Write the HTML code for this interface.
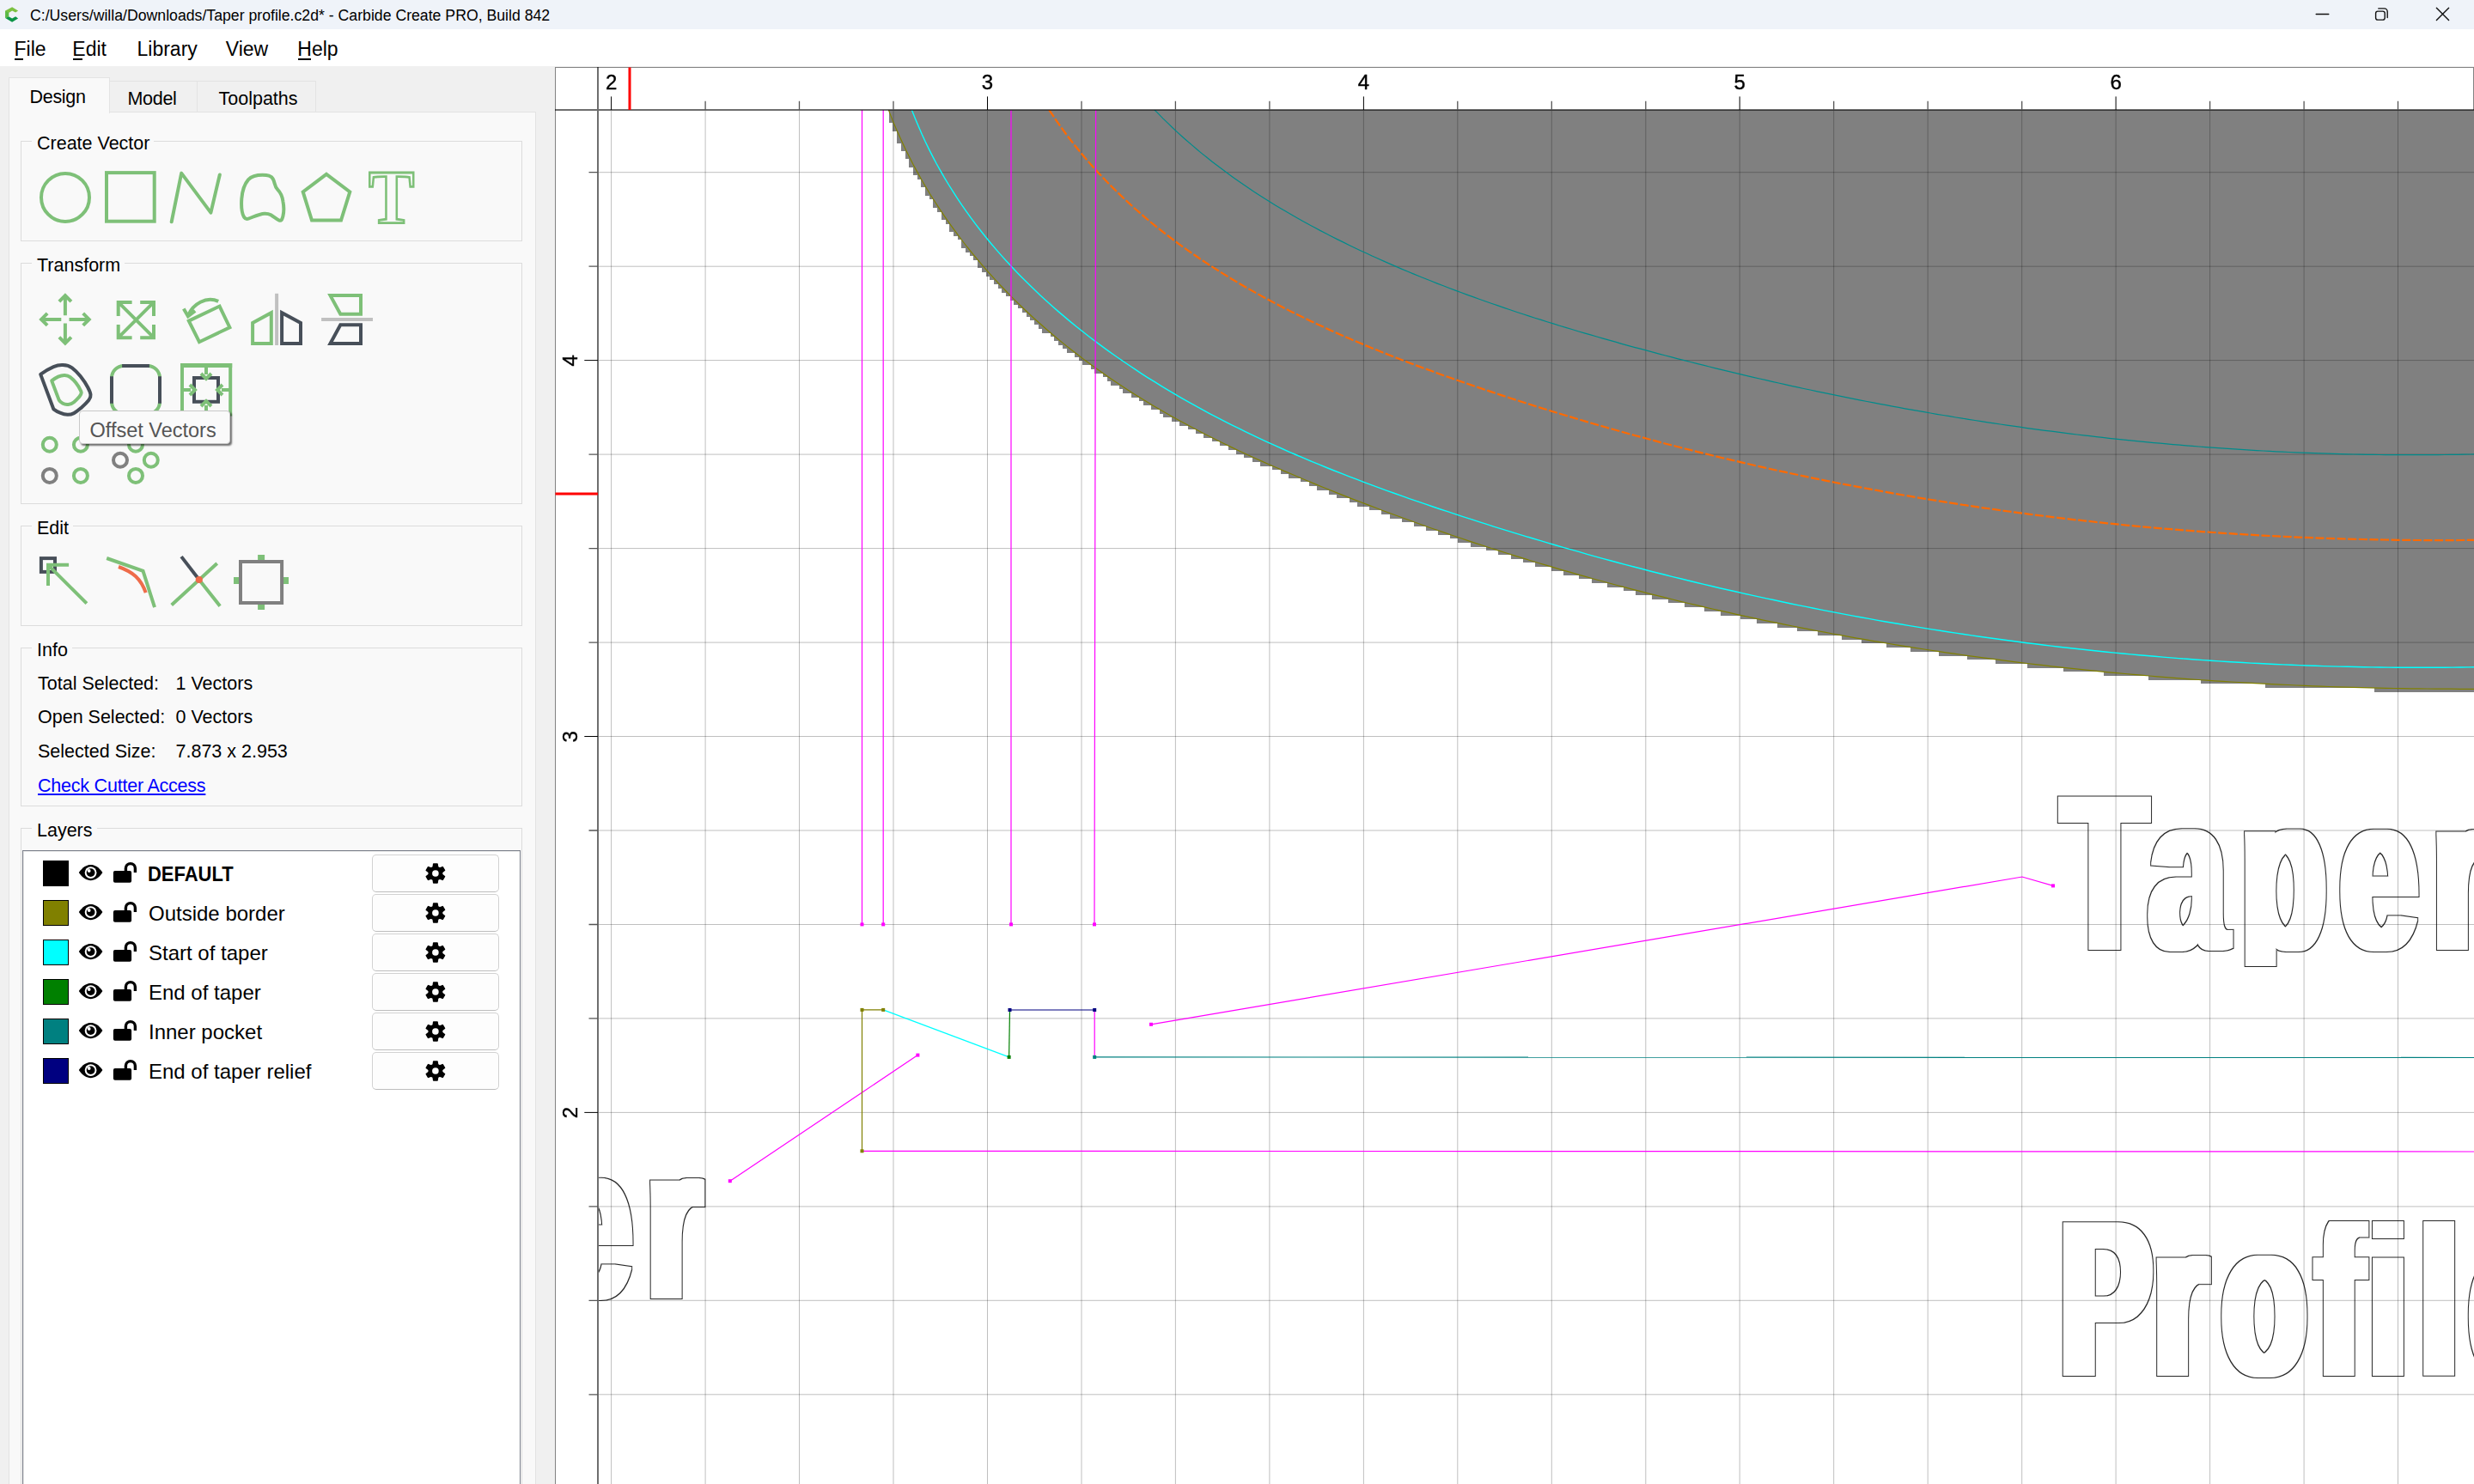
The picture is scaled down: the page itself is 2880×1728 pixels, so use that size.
<!DOCTYPE html>
<html lang="en"><head><meta charset="utf-8"><title>Carbide Create</title>
<style>
html,body{margin:0;padding:0}
body{width:2880px;height:1728px;overflow:hidden;background:#f0f0f0;font-family:"Liberation Sans",sans-serif;color:#000;position:relative}
.abs{position:absolute}
.t{position:absolute;white-space:pre;line-height:1;transform-origin:0 0;margin-top:2px}
#title{left:0;top:0;width:2880px;height:34px;background:#eff3f9}
#menu{left:0;top:34px;width:2880px;height:43px;background:#fff}
.gb{position:absolute;border:1px solid #dcdcdc;box-sizing:border-box}
  .gl{margin-top:2px;position:absolute;background:#f9f9f9;padding:0 5px 0 6px;font-size:21.5px;line-height:1;white-space:pre}
.btn{position:absolute;left:433px;width:148px;height:44px;box-sizing:border-box;border:1px solid #d2d2d2;border-bottom-color:#bdbdbd;border-radius:5px;background:#fdfdfd}
.sw{position:absolute;left:50px;width:30px;height:30px;box-sizing:border-box;border:1px solid #000}
.ln{margin-top:1.5px;transform-origin:0 0;position:absolute;left:173px;font-size:24px;line-height:1;white-space:pre}
svg{position:absolute;left:0;top:0}
</style></head><body>

<div id="title" class="abs"></div><div id="menu" class="abs"></div>
<div class="t" id="ttl" style="left:34.5px;top:6.7px;font-size:18px;transform:scaleX(0.982)">C:/Users/willa/Downloads/Taper profile.c2d* - Carbide Create PRO, Build 842</div>
<div class="t m" style="left:16.5px;top:44px;font-size:23px">File</div>
<div class="t m" style="left:84.3px;top:44px;font-size:23px">Edit</div>
<div class="t m" style="left:159.5px;top:44px;font-size:23px">Library</div>
<div class="t m" style="left:262.8px;top:44px;font-size:23px">View</div>
<div class="t m" style="left:346.3px;top:44px;font-size:23px">Help</div>
<div class="abs" style="left:16.8px;top:68px;width:10.2px;height:1.6px;background:#000"></div>
<div class="abs" style="left:84.6px;top:68px;width:11.6px;height:1.6px;background:#000"></div>
<div class="abs" style="left:346.6px;top:68px;width:15.4px;height:1.6px;background:#000"></div>
<div class="abs" style="left:10px;top:130px;width:614px;height:1610px;box-sizing:border-box;border:1px solid #e3e3e3;background:#f9f9f9"></div>
<div class="abs" style="left:127px;top:94px;width:103px;height:37px;box-sizing:border-box;border:1px solid #e3e3e3;border-left:none;background:#f0f0f0"></div>
<div class="abs" style="left:229px;top:94px;width:139px;height:37px;box-sizing:border-box;border:1px solid #e3e3e3;background:#f0f0f0"></div>
<div class="abs" style="left:10px;top:90px;width:118px;height:42px;box-sizing:border-box;border:1px solid #e3e3e3;border-bottom:none;background:#f9f9f9"></div>
<div class="t" style="left:34.5px;top:101px;font-size:21.5px;letter-spacing:-0.3px">Design</div>
<div class="t" style="left:148.5px;top:103px;font-size:21.5px;letter-spacing:-0.3px">Model</div>
<div class="t" style="left:254.5px;top:103px;font-size:21.5px">Toolpaths</div>
<div class="gb" style="left:24px;top:164px;width:584px;height:117px"></div>
<div class="gl" style="left:37px;top:155px">Create Vector</div>
<div class="gb" style="left:24px;top:306px;width:584px;height:281px"></div>
<div class="gl" style="left:37px;top:297px">Transform</div>
<div class="gb" style="left:24px;top:612px;width:584px;height:117px"></div>
<div class="gl" style="left:37px;top:603px">Edit</div>
<div class="gb" style="left:24px;top:754px;width:584px;height:185px"></div>
<div class="gl" style="left:37px;top:745px">Info</div>
<div class="gb" style="left:24px;top:964px;width:584px;height:800px"></div>
<div class="gl" style="left:37px;top:955px">Layers</div>
<div class="t" style="left:44px;top:783.5px;font-size:21.5px">Total Selected:</div>
<div class="t" style="left:204.5px;top:783.5px;font-size:21.5px">1 Vectors</div>
<div class="t" style="left:44px;top:823px;font-size:21.5px">Open Selected:</div>
<div class="t" style="left:204.5px;top:823px;font-size:21.5px">0 Vectors</div>
<div class="t" style="left:44px;top:863px;font-size:21.5px">Selected Size:</div>
<div class="t" style="left:204.5px;top:863px;font-size:21.5px">7.873 x 2.953</div>
<div class="t" style="left:44px;top:902.7px;font-size:21.5px;letter-spacing:-0.22px;color:#0000ff;text-decoration:underline">Check Cutter Access</div>
<div class="abs" style="left:26px;top:990px;width:580px;height:760px;box-sizing:border-box;border:1px solid #7a7f8a;background:#fff;box-shadow:inset 1px 1px 0 #e9e9e9"></div>
<div class="sw" style="top:1002px;background:#000000"></div>
<div class="ln" style="top:1004.4px;font-weight:bold;transform:scaleX(0.915);margin-left:-1.5px;">DEFAULT</div>
<div class="btn" style="top:995px"></div>
<div class="sw" style="top:1048px;background:#808000"></div>
<div class="ln" style="top:1050.4px;">Outside border</div>
<div class="btn" style="top:1041px"></div>
<div class="sw" style="top:1094px;background:#00ffff"></div>
<div class="ln" style="top:1096.4px;">Start of taper</div>
<div class="btn" style="top:1087px"></div>
<div class="sw" style="top:1140px;background:#008000"></div>
<div class="ln" style="top:1142.4px;">End of taper</div>
<div class="btn" style="top:1133px"></div>
<div class="sw" style="top:1186px;background:#008080"></div>
<div class="ln" style="top:1188.4px;">Inner pocket</div>
<div class="btn" style="top:1179px"></div>
<div class="sw" style="top:1232px;background:#000080"></div>
<div class="ln" style="top:1234.4px;">End of taper relief</div>
<div class="btn" style="top:1225px"></div><svg width="646" height="1728" viewBox="0 0 646 1728" fill="none" stroke-width="4">
<path d="M14.1,8.2L21.1,12.5L18.1,14.6L14.1,12.4L10.2,15V19.2L6.2,21.1V12.6Z" fill="#7cc142" stroke="none"/>
<path d="M10.2,19.2L14.1,21.6L18.1,19.2L21.1,21.4L14.1,25.7L6.2,21.1Z" fill="#0b9446" stroke="none"/>
<path d="M6.2,21.1L10.2,19.2V15L6.2,12.6Z" fill="#5ab947" stroke="none"/>
<circle cx="76" cy="229.9" r="28" stroke="#7EC078"/>
<rect x="124" y="201.1" width="55.7" height="56.6" stroke="#7EC078"/>
<path d="M199.7,258.3L211.2,201.6L245.4,247.6L255.8,203.5" stroke="#7EC078" stroke-linecap="round" stroke-linejoin="round"/>
<path d="M305.6,203.8C311,203.8 316,204 318.2,209.1C320,213 319.5,217 323.1,220.7C326,223.700 328.500,228 329.4,234.3C330.500,240 330.600,247 329.4,251.8C328.500,255.500 327.500,257.500 325,256.600C322,255.500 319,252.500 315.3,250.3C313,249 310.500,248.600 308,248.7C302,249 295,252.500 289.100,254.700C286.500,255.600 285,254.500 283.800,252.300C281.500,248 280.700,240 281.300,231.400C282,222 284.500,214.500 289.100,209.100C293,205 299,203.800 305.600,203.800Z" stroke="#7EC078"/>
<path d="M380,202.8L407.3,223.4L397,256.5H363L352.700,223.400Z" stroke="#7EC078" stroke-linejoin="miter"/>
<text transform="translate(429,259) scale(0.9,1)" x="0" y="0" font-family="Liberation Serif,serif" font-weight="bold" font-size="89" stroke="#7EC078" stroke-width="2.8">T</text>
<path d="M75.9,367.3L75.9,344.1M82.9,351.1L75.9,344.1L68.9,351.1M75.9,376.5L75.9,399.7M68.9,392.7L75.9,399.7L82.9,392.7M71.3,371.9L48.1,371.9M55.1,364.9L48.1,371.9L55.1,378.9M80.5,371.9L103.7,371.9M96.7,378.9L103.7,371.9L96.7,364.9" stroke="#7EC078" stroke-linejoin="miter"/>
<path d="M137.700,368V351.900H153.600M163.200,351.900H179V368M179,378V393.200H163.200M153.600,393.200H137.700V378M137.700,351.900L179,393.200M179,351.900L137.700,393.200" stroke="#7EC078"/>
<path d="M219.800,373.600L255.600,356.600L267.400,381.200L232,398.200Z" stroke="#7EC078"/>
<path d="M254.200,350.800C240,344.500 224.500,354 219.200,367M213.800,359.600L218.900,368.300L227.200,362" stroke="#7EC078"/>
<path d="M322.100,341.800V402" stroke="#c0c0c0"/>
<path d="M294.100,400V376L315.800,364.200V400Z" stroke="#7EC078"/>
<path d="M328.100,400V364.200L350,376V400Z" stroke="#474F59"/>
<path d="M374.100,371.900H434" stroke="#c0c0c0"/>
<path d="M384.500,344.100H420V365.800H396.300Z" stroke="#7EC078"/>
<path d="M396.300,378.300H420V400H384.500Z" stroke="#474F59"/>
<path d="M47.200,435.900C52,432.500 57,429.500 62.300,427.200C66,425.600 69.500,424.900 73.100,425.100C77,425.300 80.600,426 83.900,428.300C87.500,431 90.700,434.300 93.600,438C97,442.300 100,446.700 102.200,451C103.800,454 105.200,457 105.500,459.600C105.800,462 104.800,464.200 103.300,466.100C100.800,469.200 97.800,472 94.700,474.700C92,477 89.300,479.500 86.100,481.100C83.700,482.300 81.100,482.900 78.500,482.800C75.500,482.700 72.700,481.800 69.900,480.600C67,479.500 64.500,478 62.300,476.300Z" stroke="#474F59" stroke-linejoin="round"/>
<path d="M60.200,443.400C62.500,441.500 65,439.800 67.700,438.600C70.100,437.500 72.700,436.800 75.300,436.900C77.600,437 79.900,437.700 81.700,439.100C84.200,441 86.300,443.200 88.200,445.600C90.300,448.300 92.200,451.100 93.600,454.200C94.200,455.500 94.800,456.400 94.700,457.400C94.600,459 93.500,460.500 92.500,461.700C90.600,464 88.400,466.200 86.100,468.200C84.200,469.800 82,470.600 79.600,470.900C77.400,471.200 75,470.800 73.100,469.800C71.400,468.900 69.700,467.700 68.800,466.100Z" stroke="#7EC078" stroke-linejoin="round"/>
<rect x="130" y="426" width="56" height="56" rx="14" stroke="#7EC078"/>
<path d="M142.100,426H173.900M130,438.200V469.800M186,438.200V469.800M142.100,482H173.900" stroke="#474F59"/>
<path d="M210,425.400H270.200" stroke="#7EC078" stroke-width="5"/>
<path d="M212,423V484.400M268.200,423V484.400M210,482.400H270.200" stroke="#7EC078"/>
<path d="M240,427V436M240,472V482M213,454H222M258,454H268" stroke="#7EC078"/>
<rect x="226" y="440" width="28" height="27.800" stroke="#474F59"/>
<path d="M234,435L240,441L246,435M246,473L240,467L234,473M221,460L227,454L221,448M259,448L253,454L259,460" stroke="#7EC078"/>
<circle cx="57.8" cy="517.8" r="8" stroke="#7EC078"/>
<circle cx="93.9" cy="517.8" r="8" stroke="#7EC078"/>
<circle cx="57.8" cy="553.9" r="8" stroke="#808080"/>
<circle cx="93.9" cy="553.9" r="8" stroke="#7EC078"/>
<circle cx="158" cy="517.8" r="8" stroke="#7EC078"/>
<circle cx="140" cy="535.8" r="8" stroke="#808080"/>
<circle cx="175.8" cy="535.8" r="8" stroke="#7EC078"/>
<circle cx="158" cy="553.9" r="8" stroke="#7EC078"/>
<rect x="47.900" y="650.100" width="16.100" height="15.800" stroke="#474F59"/>
<path d="M80.100,657.800H56V682.100M56,657.800L100.900,702.700" stroke="#7EC078"/>
<path d="M124.200,650L166.500,664.900L180,707.200" stroke="#7EC078"/>
<path d="M138,660C155,666 164,674 169.700,690.100" stroke="#EE6C4A"/>
<path d="M211.100,648.100L231.800,675" stroke="#474F59"/>
<path d="M231.800,675L256.100,705.700M252.700,655.900L199.700,704.400" stroke="#7EC078"/>
<circle cx="231.800" cy="675" r="4.100" fill="#EE6C4A" stroke="none"/>
<path d="M300.100,649H308.100M300.100,707H308.100M275,672V680M333,672V680" stroke="#7EC078" stroke-width="6"/>
<rect x="280" y="654" width="48.100" height="48" stroke="#808080" fill="#f9f9f9"/>
<g transform="translate(105.600,1016.1)" stroke="none"><path d="M-13.800,0C-9.500,-6.600 -4.500,-9.100 0,-9.100C4.500,-9.100 9.500,-6.600 13.800,0C9.500,6.600 4.500,9.100 0,9.100C-4.500,9.100 -9.500,6.600 -13.800,0Z" fill="#000"/><circle r="6.900" fill="#fff"/><circle r="4.900" fill="#000"/><circle cx="-1.900" cy="-2.100" r="1.900" fill="#fff"/></g>
<g transform="translate(0,1016.1)"><rect x="131.900" y="-2.100" width="21.200" height="13.800" rx="2" fill="#000" stroke="none"/><path d="M146.400,-1V-5A5.500,5.500 0 0 1 157.400,-5V-0.100" stroke="#000" stroke-width="3.400"/></g>
<path d="M504.2,1009.7L504.7,1006L509.1,1006L509.6,1009.7L511.8,1011L515.3,1009.6L517.5,1013.4L514.6,1015.7L514.6,1018.3L517.5,1020.6L515.3,1024.4L511.8,1023L509.6,1024.3L509.1,1028L504.7,1028L504.2,1024.3L502,1023L498.5,1024.4L496.3,1020.6L499.2,1018.3L499.2,1015.7L496.3,1013.4L498.5,1009.6L502,1011Z" fill="#000" stroke="#000" stroke-width="1.500" stroke-linejoin="round"/><circle cx="506.9" cy="1017" r="3.8" fill="#fdfdfd" stroke="none"/>
<g transform="translate(105.600,1062.1)" stroke="none"><path d="M-13.800,0C-9.500,-6.600 -4.500,-9.100 0,-9.100C4.500,-9.100 9.500,-6.600 13.800,0C9.500,6.600 4.500,9.100 0,9.100C-4.500,9.100 -9.500,6.600 -13.800,0Z" fill="#000"/><circle r="6.900" fill="#fff"/><circle r="4.900" fill="#000"/><circle cx="-1.900" cy="-2.100" r="1.900" fill="#fff"/></g>
<g transform="translate(0,1062.1)"><rect x="131.900" y="-2.100" width="21.200" height="13.800" rx="2" fill="#000" stroke="none"/><path d="M146.400,-1V-5A5.500,5.500 0 0 1 157.400,-5V-0.100" stroke="#000" stroke-width="3.400"/></g>
<path d="M504.2,1055.7L504.7,1052L509.1,1052L509.6,1055.7L511.8,1057L515.3,1055.6L517.5,1059.4L514.6,1061.7L514.6,1064.3L517.5,1066.6L515.3,1070.4L511.8,1069L509.6,1070.3L509.1,1074L504.7,1074L504.2,1070.3L502,1069L498.5,1070.4L496.3,1066.6L499.2,1064.3L499.2,1061.7L496.3,1059.4L498.5,1055.6L502,1057Z" fill="#000" stroke="#000" stroke-width="1.500" stroke-linejoin="round"/><circle cx="506.9" cy="1063" r="3.8" fill="#fdfdfd" stroke="none"/>
<g transform="translate(105.600,1108.1)" stroke="none"><path d="M-13.800,0C-9.500,-6.600 -4.500,-9.100 0,-9.100C4.500,-9.100 9.500,-6.600 13.800,0C9.500,6.600 4.500,9.100 0,9.100C-4.500,9.100 -9.500,6.600 -13.800,0Z" fill="#000"/><circle r="6.900" fill="#fff"/><circle r="4.900" fill="#000"/><circle cx="-1.900" cy="-2.100" r="1.900" fill="#fff"/></g>
<g transform="translate(0,1108.1)"><rect x="131.900" y="-2.100" width="21.200" height="13.800" rx="2" fill="#000" stroke="none"/><path d="M146.400,-1V-5A5.500,5.500 0 0 1 157.400,-5V-0.100" stroke="#000" stroke-width="3.400"/></g>
<path d="M504.2,1101.7L504.7,1098L509.1,1098L509.6,1101.7L511.8,1103L515.3,1101.6L517.5,1105.4L514.6,1107.7L514.6,1110.3L517.5,1112.6L515.3,1116.4L511.8,1115L509.6,1116.3L509.1,1120L504.7,1120L504.2,1116.3L502,1115L498.5,1116.4L496.3,1112.6L499.2,1110.3L499.2,1107.7L496.3,1105.4L498.5,1101.6L502,1103Z" fill="#000" stroke="#000" stroke-width="1.500" stroke-linejoin="round"/><circle cx="506.9" cy="1109" r="3.8" fill="#fdfdfd" stroke="none"/>
<g transform="translate(105.600,1154.1)" stroke="none"><path d="M-13.800,0C-9.500,-6.600 -4.500,-9.100 0,-9.100C4.500,-9.100 9.500,-6.600 13.800,0C9.500,6.600 4.500,9.100 0,9.100C-4.500,9.100 -9.500,6.600 -13.800,0Z" fill="#000"/><circle r="6.900" fill="#fff"/><circle r="4.900" fill="#000"/><circle cx="-1.900" cy="-2.100" r="1.900" fill="#fff"/></g>
<g transform="translate(0,1154.1)"><rect x="131.900" y="-2.100" width="21.200" height="13.800" rx="2" fill="#000" stroke="none"/><path d="M146.400,-1V-5A5.500,5.500 0 0 1 157.400,-5V-0.100" stroke="#000" stroke-width="3.400"/></g>
<path d="M504.2,1147.7L504.7,1144L509.1,1144L509.6,1147.7L511.8,1149L515.3,1147.6L517.5,1151.4L514.6,1153.7L514.6,1156.3L517.5,1158.6L515.3,1162.4L511.8,1161L509.6,1162.3L509.1,1166L504.7,1166L504.2,1162.3L502,1161L498.5,1162.4L496.3,1158.6L499.2,1156.3L499.2,1153.7L496.3,1151.4L498.5,1147.6L502,1149Z" fill="#000" stroke="#000" stroke-width="1.500" stroke-linejoin="round"/><circle cx="506.9" cy="1155" r="3.8" fill="#fdfdfd" stroke="none"/>
<g transform="translate(105.600,1200.1)" stroke="none"><path d="M-13.800,0C-9.500,-6.600 -4.500,-9.100 0,-9.100C4.500,-9.100 9.500,-6.600 13.800,0C9.500,6.600 4.500,9.100 0,9.100C-4.500,9.100 -9.500,6.600 -13.800,0Z" fill="#000"/><circle r="6.900" fill="#fff"/><circle r="4.900" fill="#000"/><circle cx="-1.900" cy="-2.100" r="1.900" fill="#fff"/></g>
<g transform="translate(0,1200.1)"><rect x="131.900" y="-2.100" width="21.200" height="13.800" rx="2" fill="#000" stroke="none"/><path d="M146.400,-1V-5A5.500,5.500 0 0 1 157.400,-5V-0.100" stroke="#000" stroke-width="3.400"/></g>
<path d="M504.2,1193.7L504.7,1190L509.1,1190L509.6,1193.7L511.8,1195L515.3,1193.6L517.5,1197.4L514.6,1199.7L514.6,1202.3L517.5,1204.6L515.3,1208.4L511.8,1207L509.6,1208.3L509.1,1212L504.7,1212L504.2,1208.3L502,1207L498.5,1208.4L496.3,1204.6L499.2,1202.3L499.2,1199.7L496.3,1197.4L498.5,1193.6L502,1195Z" fill="#000" stroke="#000" stroke-width="1.500" stroke-linejoin="round"/><circle cx="506.9" cy="1201" r="3.8" fill="#fdfdfd" stroke="none"/>
<g transform="translate(105.600,1246.1)" stroke="none"><path d="M-13.800,0C-9.500,-6.600 -4.500,-9.100 0,-9.100C4.500,-9.100 9.500,-6.600 13.800,0C9.500,6.600 4.500,9.100 0,9.100C-4.500,9.100 -9.500,6.600 -13.800,0Z" fill="#000"/><circle r="6.900" fill="#fff"/><circle r="4.900" fill="#000"/><circle cx="-1.900" cy="-2.100" r="1.900" fill="#fff"/></g>
<g transform="translate(0,1246.1)"><rect x="131.900" y="-2.100" width="21.200" height="13.800" rx="2" fill="#000" stroke="none"/><path d="M146.400,-1V-5A5.500,5.500 0 0 1 157.400,-5V-0.100" stroke="#000" stroke-width="3.400"/></g>
<path d="M504.2,1239.7L504.7,1236L509.1,1236L509.6,1239.7L511.8,1241L515.3,1239.6L517.5,1243.4L514.6,1245.7L514.6,1248.3L517.5,1250.6L515.3,1254.4L511.8,1253L509.6,1254.3L509.1,1258L504.7,1258L504.2,1254.3L502,1253L498.5,1254.4L496.3,1250.6L499.2,1248.3L499.2,1245.7L496.3,1243.4L498.5,1239.6L502,1241Z" fill="#000" stroke="#000" stroke-width="1.500" stroke-linejoin="round"/><circle cx="506.9" cy="1247" r="3.8" fill="#fdfdfd" stroke="none"/>
</svg>
<div class="abs" style="left:92px;top:478px;width:176px;height:39px;box-sizing:border-box;border:1px solid #c9c9c9;border-radius:4px;background:#fafafa;box-shadow:2px 2px 2px rgba(0,0,0,0.55)"></div>
<div class="t" style="left:104.500px;top:487.500px;font-size:23.500px;color:#555">Offset Vectors</div><svg width="2880" height="1728" viewBox="0 0 2880 1728">
<defs><clipPath id="cv"><rect x="697" y="128" width="2183" height="1600"/></clipPath><filter id="ol" filterUnits="userSpaceOnUse" x="640" y="860" width="2300" height="868" color-interpolation-filters="sRGB"><feMorphology in="SourceAlpha" operator="dilate" radius="8 2" result="a"/><feMorphology in="SourceAlpha" operator="dilate" radius="7 1" result="b"/><feComposite in="a" in2="b" operator="out"/></filter></defs>
<rect x="646" y="78" width="2234" height="1650" fill="#fff"/>
<g clip-path="url(#cv)">
<path d="M1034.7,128V143.1H1039.4V152.5H1044.1V166.6H1048.8V176H1053.5V185.4H1058.2V194.8H1062.9V204.2H1067.6V208.9H1072.3V218.3H1077V227.7H1081.7V232.4H1086.4V241.8H1091.1V246.5H1095.8V255.9H1100.5V260.6H1105.2V270H1109.9V274.7H1114.6V279.4H1119.3V288.8H1124V293.5H1128.7V298.2H1133.4V302.9H1138.1V312.3H1142.8V317H1147.5V321.7H1152.2V326.4H1156.9V331.1H1161.6V335.8H1166.3V340.5H1171V345.2H1175.7V349.9H1180.4V354.6H1185.1V359.3H1189.8V364H1194.5V368.7H1199.2V373.4H1203.9V378.1H1208.6V382.8H1213.3V387.5H1222.7V392.2H1227.4V396.9H1232.1V401.6H1236.8V406.3H1241.5V411H1250.9V415.7H1255.6V420.4H1260.3V425.1H1269.7V429.8H1274.4V434.5H1283.8V439.2H1288.5V443.9H1293.2V448.6H1302.6V453.3H1307.3V458H1316.7V462.7H1326.1V467.4H1330.8V472.1H1340.2V476.8H1349.6V481.5H1354.3V486.2H1363.7V490.9H1373.1V495.6H1382.5V500.3H1391.9V505H1401.3V509.7H1410.7V514.4H1420.1V519.1H1429.5V523.8H1438.9V528.5H1448.3V533.2H1457.7V537.9H1467.1V542.6H1481.2V547.3H1490.6V552H1500V556.7H1514.1V561.4H1523.5V566.1H1532.9V570.8H1547V575.5H1556.4V580.2H1570.5V584.9H1579.9V589.6H1594V594.3H1608.1V599H1617.5V603.7H1631.6V608.4H1645.7V613.1H1659.8V617.8H1673.9V622.5H1688V627.2H1697.4V631.9H1711.5V636.6H1730.3V641.3H1744.4V646H1758.5V650.7H1772.6V655.4H1786.7V660.1H1805.5V664.8H1819.6V669.5H1838.4V674.2H1852.5V678.9H1871.3V683.6H1890.1V688.3H1904.2V693H1923V697.7H1941.8V702.4H1960.6V707.1H1984.1V711.8H2002.9V716.5H2026.4V721.2H2045.2V725.9H2068.7V730.6H2092.2V735.3H2115.7V740H2143.9V744.7H2167.4V749.4H2195.6V754.1H2223.8V758.8H2256.7V763.5H2289.6V768.2H2322.5V772.9H2360.1V777.6H2402.4V782.3H2449.4V787H2501.1V791.7H2562.2V796.4H2637.4V801.1H2764.3V805.8H2880V128Z" fill="#808080" shape-rendering="crispEdges"/>
<g opacity="0.25"><path d="M711.6,129V1728M821.1,129V1728M930.5,129V1728M1040,129V1728M1149.5,129V1728M1259,129V1728M1368.4,129V1728M1477.9,129V1728M1587.4,129V1728M1696.8,129V1728M1806.3,129V1728M1915.8,129V1728M2025.2,129V1728M2134.7,129V1728M2244.2,129V1728M2353.7,129V1728M2463.1,129V1728M2572.6,129V1728M2682.1,129V1728M2791.5,129V1728M697,200.7H2880M697,310.2H2880M697,419.6H2880M697,529.1H2880M697,638.6H2880M697,748.1H2880M697,857.5H2880M697,967H2880M697,1076.5H2880M697,1185.9H2880M697,1295.4H2880M697,1404.9H2880M697,1514.3H2880M697,1623.8H2880" stroke="#000" stroke-width="1" fill="none"/></g>
<path d="M1025.7,103.5L1028.8,112.7L1032.1,121.8L1035.5,130.9L1039,139.9L1042.7,148.8L1046.6,157.6L1050.6,166.3L1054.7,175L1059,183.5L1063.3,192L1067.9,200.4L1072.5,208.8L1077.3,217L1082.2,225.2L1087.3,233.3L1092.4,241.2L1097.7,249.2L1103.1,257L1108.6,264.7L1114.3,272.4L1120,280L1125.8,287.5L1131.8,294.9L1137.9,302.2L1144,309.4L1150.3,316.6L1156.7,323.7L1163.1,330.6L1169.7,337.5L1176.3,344.3L1183.1,351.1L1189.9,357.7L1196.8,364.2L1203.8,370.7L1210.9,377L1218,383.3L1225.3,389.5L1232.6,395.6L1240,401.6L1247.4,407.5L1255,413.3L1262.5,419.1L1270.2,424.7L1277.9,430.3L1285.7,435.8L1293.6,441.2L1301.5,446.5L1309.4,451.7L1317.5,456.9L1325.5,462L1333.7,467L1341.8,471.9L1350,476.7L1358.3,481.5L1366.6,486.2L1374.9,490.8L1383.3,495.3L1391.8,499.8L1400.2,504.2L1408.7,508.5L1417.2,512.8L1425.8,517L1434.4,521.1L1443,525.2L1451.6,529.2L1460.3,533.2L1469,537.1L1477.7,541L1486.5,544.8L1495.2,548.6L1504,552.3L1512.8,556L1521.6,559.7L1530.4,563.4L1539.2,567L1548.1,570.5L1556.9,574.1L1565.8,577.6L1574.7,581.1L1583.6,584.5L1592.5,587.9L1601.4,591.3L1610.3,594.7L1619.2,598L1628.2,601.3L1637.1,604.5L1646.1,607.8L1655,611L1664,614.2L1673,617.3L1682,620.4L1691,623.5L1700.1,626.5L1709.1,629.6L1718.1,632.6L1727.2,635.5L1736.3,638.5L1745.3,641.4L1754.4,644.2L1763.5,647.1L1772.6,649.9L1781.7,652.7L1790.8,655.5L1799.9,658.2L1809.1,660.9L1818.2,663.6L1827.4,666.2L1836.5,668.8L1845.7,671.4L1854.9,674L1864.1,676.5L1873.3,679L1882.5,681.5L1891.7,683.9L1900.9,686.3L1910.1,688.7L1919.3,691.1L1928.6,693.4L1937.8,695.7L1947.1,698L1956.3,700.3L1965.6,702.5L1974.9,704.7L1984.2,706.9L1993.4,709L2002.7,711.1L2012,713.2L2021.3,715.3L2030.7,717.3L2040,719.3L2049.3,721.3L2058.6,723.3L2068,725.2L2077.3,727.1L2086.7,729L2096,730.8L2105.4,732.7L2114.7,734.5L2124.1,736.2L2133.5,738L2142.9,739.7L2152.3,741.4L2161.6,743.1L2171,744.7L2180.4,746.3L2189.9,747.9L2199.3,749.5L2208.7,751.1L2218.1,752.6L2227.5,754.1L2236.9,755.5L2246.4,757L2255.8,758.4L2265.3,759.8L2274.7,761.2L2284.1,762.5L2293.6,763.9L2303,765.2L2312.5,766.4L2322,767.7L2331.4,768.9L2340.9,770.1L2350.4,771.3L2359.8,772.5L2369.3,773.6L2378.8,774.7L2388.3,775.8L2397.8,776.9L2407.2,777.9L2416.7,778.9L2426.2,779.9L2435.7,780.9L2445.2,781.8L2454.7,782.8L2464.2,783.7L2473.7,784.5L2483.2,785.4L2492.7,786.2L2502.2,787L2511.7,787.8L2521.2,788.6L2530.7,789.3L2540.2,790.1L2549.7,790.8L2559.2,791.5L2568.8,792.1L2578.3,792.8L2587.8,793.4L2597.3,794L2606.8,794.5L2616.3,795.1L2625.8,795.6L2635.3,796.1L2644.9,796.6L2654.4,797.1L2663.9,797.5L2673.4,798L2682.9,798.4L2692.4,798.8L2701.9,799.1L2711.4,799.5L2720.9,799.8L2730.5,800.1L2740,800.4L2749.5,800.6L2759,800.9L2768.5,801.1L2778,801.3L2787.5,801.5L2797,801.7L2806.5,801.8L2816,801.9L2825.5,802L2835,802.1L2844.4,802.2L2853.9,802.2L2863.4,802.3L2872.9,802.3L2882.4,802.3" fill="none" stroke="#808000" stroke-width="1.2"/>
<path d="M1052.4,102L1055.5,111.3L1058.7,120.6L1062.1,129.7L1065.7,138.7L1069.4,147.5L1073.2,156.3L1077.2,165L1081.4,173.6L1085.7,182.1L1090.1,190.5L1094.7,198.7L1099.4,206.9L1104.3,215L1109.3,222.9L1114.4,230.8L1119.6,238.6L1125,246.3L1130.4,253.9L1136,261.4L1141.7,268.7L1147.5,276L1153.4,283.2L1159.5,290.4L1165.6,297.4L1171.8,304.3L1178.1,311.1L1184.6,317.9L1191.1,324.5L1197.7,331.1L1204.4,337.6L1211.1,344L1218,350.3L1224.9,356.5L1231.9,362.6L1239,368.6L1246.1,374.6L1253.3,380.5L1260.6,386.3L1267.9,392L1275.3,397.6L1282.7,403.1L1290.2,408.6L1297.8,414L1305.4,419.3L1313.1,424.5L1320.8,429.7L1328.5,434.8L1336.3,439.8L1344.2,444.7L1352.1,449.6L1360,454.4L1368,459.1L1376.1,463.8L1384.1,468.4L1392.3,472.9L1400.4,477.4L1408.6,481.8L1416.9,486.1L1425.1,490.4L1433.4,494.6L1441.8,498.7L1450.2,502.8L1458.6,506.9L1467,510.9L1475.5,514.8L1484,518.7L1492.6,522.5L1501.1,526.3L1509.7,530L1518.3,533.7L1527,537.4L1535.7,540.9L1544.4,544.5L1553.1,548L1561.8,551.4L1570.6,554.9L1579.4,558.2L1588.2,561.6L1597,564.9L1605.8,568.1L1614.6,571.3L1623.5,574.5L1632.4,577.7L1641.3,580.8L1650.2,583.9L1659.1,586.9L1668,590L1676.9,593L1685.9,595.9L1694.8,598.9L1703.8,601.8L1712.7,604.7L1721.7,607.6L1730.6,610.4L1739.6,613.3L1748.6,616.1L1757.6,618.8L1766.5,621.6L1775.5,624.3L1784.5,627L1793.5,629.7L1802.5,632.4L1811.5,635L1820.5,637.6L1829.6,640.2L1838.6,642.7L1847.6,645.3L1856.6,647.8L1865.7,650.3L1874.7,652.7L1883.8,655.2L1892.8,657.6L1901.9,660L1910.9,662.3L1920,664.7L1929,667L1938.1,669.3L1947.2,671.6L1956.3,673.8L1965.4,676L1974.5,678.2L1983.5,680.4L1992.6,682.5L2001.8,684.7L2010.9,686.8L2020,688.8L2029.1,690.9L2038.2,692.9L2047.3,694.9L2056.5,696.9L2065.6,698.8L2074.7,700.8L2083.9,702.7L2093,704.6L2102.2,706.4L2111.3,708.3L2120.5,710.1L2129.6,711.9L2138.8,713.6L2148,715.4L2157.2,717.1L2166.3,718.8L2175.5,720.4L2184.7,722.1L2193.9,723.7L2203.1,725.3L2212.3,726.8L2221.5,728.4L2230.7,729.9L2239.9,731.4L2249.1,732.9L2258.3,734.3L2267.5,735.7L2276.8,737.1L2286,738.5L2295.2,739.9L2304.5,741.2L2313.7,742.5L2323,743.8L2332.2,745L2341.4,746.3L2350.7,747.5L2360,748.7L2369.2,749.8L2378.5,751L2387.8,752.1L2397,753.2L2406.3,754.2L2415.6,755.3L2424.9,756.3L2434.1,757.3L2443.4,758.2L2452.7,759.2L2462,760.1L2471.3,761L2480.6,761.9L2489.9,762.7L2499.2,763.5L2508.5,764.3L2517.9,765.1L2527.2,765.9L2536.5,766.6L2545.8,767.3L2555.1,768L2564.5,768.6L2573.8,769.3L2583.1,769.9L2592.5,770.5L2601.8,771L2611.2,771.5L2620.5,772.1L2629.9,772.5L2639.2,773L2648.6,773.5L2657.9,773.9L2667.3,774.3L2676.7,774.6L2686,775L2695.4,775.3L2704.8,775.6L2714.2,775.9L2723.5,776.1L2732.9,776.3L2742.3,776.5L2751.7,776.7L2761.1,776.9L2770.5,777L2779.9,777.1L2789.3,777.2L2798.7,777.2L2808.1,777.3L2817.5,777.3L2826.9,777.3L2836.3,777.2L2845.7,777.2L2855.1,777.1L2864.6,777L2874,776.9L2883.4,776.7" fill="none" stroke="#00ffff" stroke-width="1.4"/>
<path d="M1327.7,110.2L1332.8,116L1338.1,121.6L1343.3,127.2L1348.7,132.7L1354,138.1L1359.5,143.4L1365,148.7L1370.5,153.9L1376.1,159L1381.8,164L1387.5,168.9L1393.2,173.8L1399,178.6L1404.9,183.3L1410.7,188L1416.7,192.6L1422.7,197.1L1428.7,201.6L1434.7,206L1440.8,210.3L1447,214.6L1453.2,218.8L1459.4,222.9L1465.6,227L1471.9,231L1478.3,235L1484.6,238.9L1491,242.8L1497.5,246.6L1503.9,250.3L1510.4,254L1517,257.7L1523.5,261.3L1530.1,264.8L1536.7,268.4L1543.3,271.8L1550,275.2L1556.7,278.6L1563.4,281.9L1570.1,285.2L1576.8,288.5L1583.6,291.7L1590.4,294.8L1597.2,298L1604,301L1610.9,304.1L1617.7,307.1L1624.6,310.1L1631.5,313.1L1638.4,316L1645.3,318.9L1652.3,321.7L1659.2,324.5L1666.2,327.3L1673.2,330.1L1680.2,332.8L1687.2,335.5L1694.2,338.1L1701.3,340.8L1708.3,343.4L1715.4,345.9L1722.5,348.5L1729.6,351L1736.7,353.5L1743.8,355.9L1750.9,358.4L1758,360.8L1765.2,363.2L1772.3,365.5L1779.5,367.9L1786.7,370.2L1793.9,372.4L1801,374.7L1808.2,376.9L1815.5,379.2L1822.7,381.4L1829.9,383.5L1837.1,385.7L1844.4,387.8L1851.6,389.9L1858.8,392L1866.1,394.1L1873.3,396.2L1880.6,398.2L1887.9,400.3L1895.1,402.3L1902.4,404.3L1909.7,406.2L1917,408.2L1924.3,410.1L1931.5,412.1L1938.8,414L1946.1,415.9L1953.4,417.8L1960.7,419.7L1968,421.5L1975.3,423.4L1982.6,425.2L1989.9,427L1997.2,428.8L2004.6,430.6L2011.9,432.4L2019.2,434.1L2026.5,435.9L2033.8,437.6L2041.2,439.3L2048.5,441L2055.8,442.7L2063.1,444.4L2070.5,446L2077.8,447.6L2085.2,449.3L2092.5,450.9L2099.8,452.5L2107.2,454L2114.5,455.6L2121.9,457.1L2129.3,458.7L2136.6,460.2L2144,461.7L2151.3,463.2L2158.7,464.6L2166.1,466.1L2173.4,467.5L2180.8,468.9L2188.2,470.3L2195.6,471.7L2202.9,473.1L2210.3,474.4L2217.7,475.8L2225.1,477.1L2232.5,478.4L2239.9,479.7L2247.3,481L2254.7,482.3L2262.1,483.5L2269.5,484.7L2276.9,486L2284.3,487.2L2291.7,488.3L2299.1,489.5L2306.5,490.7L2313.9,491.8L2321.3,492.9L2328.7,494L2336.2,495.1L2343.6,496.2L2351,497.2L2358.4,498.3L2365.9,499.3L2373.3,500.3L2380.7,501.3L2388.2,502.2L2395.6,503.2L2403,504.1L2410.5,505.1L2417.9,506L2425.4,506.9L2432.8,507.7L2440.3,508.6L2447.7,509.4L2455.2,510.3L2462.6,511.1L2470.1,511.9L2477.5,512.6L2485,513.4L2492.5,514.1L2499.9,514.9L2507.4,515.6L2514.9,516.2L2522.3,516.9L2529.8,517.6L2537.3,518.2L2544.8,518.8L2552.2,519.4L2559.7,520L2567.2,520.6L2574.7,521.2L2582.2,521.7L2589.7,522.2L2597.2,522.7L2604.7,523.2L2612.2,523.7L2619.6,524.1L2627.1,524.6L2634.6,525L2642.2,525.4L2649.7,525.8L2657.2,526.1L2664.7,526.5L2672.2,526.8L2679.7,527.1L2687.2,527.4L2694.7,527.7L2702.2,527.9L2709.7,528.2L2717.3,528.4L2724.8,528.6L2732.3,528.8L2739.8,529L2747.4,529.1L2754.9,529.3L2762.4,529.4L2770,529.5L2777.5,529.6L2785,529.6L2792.6,529.7L2800.1,529.7L2807.6,529.7L2815.2,529.7L2822.7,529.7L2830.3,529.7L2837.8,529.6L2845.4,529.5L2852.9,529.4L2860.5,529.3L2868,529.2L2875.6,529L2883.1,528.9" fill="none" stroke="#008b8b" stroke-width="1.2"/>
<path d="M1207.9,106.5L1212.4,114L1217,121.3L1221.7,128.6L1226.5,135.7L1231.3,142.7L1236.3,149.6L1241.3,156.5L1246.4,163.2L1251.6,169.8L1256.9,176.3L1262.3,182.8L1267.8,189.1L1273.3,195.3L1278.9,201.5L1284.6,207.5L1290.3,213.5L1296.2,219.4L1302.1,225.1L1308,230.8L1314.1,236.4L1320.2,242L1326.4,247.4L1332.6,252.8L1338.9,258.1L1345.3,263.3L1351.7,268.4L1358.2,273.4L1364.7,278.4L1371.3,283.3L1377.9,288.1L1384.6,292.8L1391.4,297.5L1398.1,302.1L1405,306.7L1411.9,311.1L1418.8,315.5L1425.8,319.9L1432.8,324.2L1439.8,328.4L1446.9,332.5L1454.1,336.6L1461.2,340.6L1468.4,344.6L1475.7,348.5L1482.9,352.4L1490.2,356.2L1497.6,360L1504.9,363.7L1512.3,367.3L1519.7,370.9L1527.1,374.5L1534.6,378L1542.1,381.4L1549.6,384.9L1557.1,388.2L1564.7,391.6L1572.2,394.8L1579.8,398.1L1587.5,401.3L1595.1,404.5L1602.8,407.6L1610.4,410.7L1618.1,413.7L1625.8,416.7L1633.5,419.7L1641.3,422.7L1649,425.6L1656.8,428.5L1664.6,431.3L1672.3,434.2L1680.1,437L1688,439.7L1695.8,442.5L1703.6,445.2L1711.4,447.9L1719.3,450.6L1727.1,453.3L1735,455.9L1742.8,458.5L1750.7,461.1L1758.6,463.7L1766.4,466.2L1774.3,468.8L1782.2,471.3L1790.1,473.8L1798,476.2L1805.9,478.7L1813.8,481.1L1821.7,483.5L1829.7,485.9L1837.6,488.3L1845.5,490.6L1853.5,493L1861.4,495.3L1869.4,497.5L1877.3,499.8L1885.3,502L1893.2,504.3L1901.2,506.5L1909.2,508.6L1917.2,510.8L1925.2,512.9L1933.2,515.1L1941.1,517.2L1949.2,519.2L1957.2,521.3L1965.2,523.3L1973.2,525.4L1981.2,527.4L1989.2,529.3L1997.3,531.3L2005.3,533.2L2013.3,535.1L2021.4,537L2029.4,538.9L2037.5,540.8L2045.5,542.6L2053.6,544.4L2061.7,546.2L2069.7,548L2077.8,549.7L2085.9,551.5L2094,553.2L2102.1,554.9L2110.2,556.6L2118.3,558.2L2126.4,559.8L2134.5,561.5L2142.6,563.1L2150.7,564.6L2158.8,566.2L2166.9,567.7L2175,569.2L2183.2,570.7L2191.3,572.2L2199.4,573.7L2207.6,575.1L2215.7,576.5L2223.9,577.9L2232,579.3L2240.2,580.7L2248.3,582L2256.5,583.3L2264.6,584.6L2272.8,585.9L2281,587.2L2289.1,588.4L2297.3,589.7L2305.5,590.9L2313.7,592L2321.9,593.2L2330,594.4L2338.2,595.5L2346.4,596.6L2354.6,597.7L2362.8,598.8L2371,599.8L2379.2,600.8L2387.4,601.9L2395.6,602.9L2403.8,603.8L2412.1,604.8L2420.3,605.7L2428.5,606.6L2436.7,607.5L2444.9,608.4L2453.2,609.3L2461.4,610.1L2469.6,611L2477.8,611.8L2486.1,612.6L2494.3,613.3L2502.5,614.1L2510.8,614.8L2519,615.5L2527.3,616.2L2535.5,616.9L2543.8,617.5L2552,618.2L2560.3,618.8L2568.5,619.4L2576.8,620L2585,620.6L2593.3,621.1L2601.5,621.6L2609.8,622.1L2618.1,622.6L2626.3,623.1L2634.6,623.6L2642.9,624L2651.1,624.4L2659.4,624.8L2667.7,625.2L2675.9,625.6L2684.2,625.9L2692.5,626.2L2700.7,626.6L2709,626.8L2717.3,627.1L2725.6,627.4L2733.8,627.6L2742.1,627.8L2750.4,628L2758.7,628.2L2767,628.4L2775.2,628.5L2783.5,628.7L2791.8,628.8L2800.1,628.9L2808.4,629L2816.6,629L2824.9,629.1L2833.2,629.1L2841.5,629.1L2849.8,629.1L2858.1,629.1L2866.3,629L2874.6,628.9L2882.9,628.9" fill="none" stroke="#ff6a00" stroke-width="2.2" stroke-dasharray="10 2.6"/>
<path d="M1003.5,100V1076.4M1028.2,100V1076.4M1177,100V1076.4M1275.7,100L1274,1076.4M1274.2,1176V1230.9M1068.4,1228.6L849.8,1375.2M1340,1192.8L2354,1021L2390,1031.4M1003.5,1340.3L2880,1341" stroke="#ff00ff" stroke-width="1.2" fill="none"/>
<path d="M1003.5,1340.3V1175.9H1028.2" stroke="#808000" stroke-width="1.2" fill="none"/>
<path d="M1028.2,1175.9L1174.6,1230.9" stroke="#00ffff" stroke-width="1.3" fill="none"/>
<path d="M1174.6,1230.9L1175.5,1176" stroke="#008000" stroke-width="1.2" fill="none"/>
<path d="M1175.5,1176H1274.2" stroke="#000080" stroke-width="1.2" fill="none"/>
<path d="M1274.2,1230.9L2880,1231.5" stroke="#008080" stroke-width="1.2" fill="none"/>
<rect x="1001.5" y="1074.4" width="4" height="4" fill="#ff00ff"/>
<rect x="1026.2" y="1074.4" width="4" height="4" fill="#ff00ff"/>
<rect x="1175" y="1074.4" width="4" height="4" fill="#ff00ff"/>
<rect x="1272" y="1074.4" width="4" height="4" fill="#ff00ff"/>
<rect x="1066.4" y="1226.6" width="4" height="4" fill="#ff00ff"/>
<rect x="847.8" y="1373.2" width="4" height="4" fill="#ff00ff"/>
<rect x="1338" y="1190.8" width="4" height="4" fill="#ff00ff"/>
<rect x="2388" y="1029.4" width="4" height="4" fill="#ff00ff"/>
<rect x="1001.5" y="1173.9" width="4" height="4" fill="#808000"/>
<rect x="1026.2" y="1173.9" width="4" height="4" fill="#808000"/>
<rect x="1001.5" y="1338.3" width="4" height="4" fill="#808000"/>
<rect x="1172.6" y="1228.9" width="4" height="4" fill="#008000"/>
<rect x="1173.5" y="1174" width="4" height="4" fill="#000080"/>
<rect x="1272.2" y="1174" width="4" height="4" fill="#000080"/>
<rect x="1272.2" y="1228.9" width="4" height="4" fill="#008080"/>
<g filter="url(#ol)" opacity="0.85">
<clipPath id="tc1105"><rect x="-200" y="927.5" width="3400" height="196.5"/></clipPath>
<g clip-path="url(#tc1105)">
<text transform="translate(0,1105) scale(1.6,2.56)" x="1500.7 1564.1 1630.9 1703.2 1770.4" y="0" font-family="Liberation Sans,sans-serif" font-weight="bold" font-size="100" fill="#000">Taper</text></g>
<clipPath id="tc1511"><rect x="-200" y="1334" width="3400" height="196.5"/></clipPath>
<g clip-path="url(#tc1511)">
<text transform="translate(0,1511.5) scale(1.6,2.56)" x="201.3 264.7 331.5 403.8 471" y="0" font-family="Liberation Sans,sans-serif" font-weight="bold" font-size="100" fill="#000">Taper</text></g>
<clipPath id="tc1601"><rect x="-200" y="1423.8" width="3400" height="196.5"/></clipPath>
<g clip-path="url(#tc1601)">
<text transform="translate(0,1601.3) scale(1.6,2.56)" x="1498.8 1566.9 1616.8 1685.5 1723.6 1760.7 1796.6" y="0" font-family="Liberation Sans,sans-serif" font-weight="bold" font-size="100" fill="#000">Profile</text></g>
</g>
</g>
<path d="M646.5,78V1728M646,78.5H2880M2879.5,78V129" stroke="#828282" stroke-width="1" fill="none"/>
<path d="M696,78V1728M646,128H2880" stroke="#000" stroke-opacity="0.57" stroke-width="2" fill="none"/>
<path d="M711.6,112.4V128M1149.5,112.4V128M1587.4,112.4V128M2025.2,112.4V128M2463.1,112.4V128M680.3,419.6H696M680.3,857.5H696M680.3,1295.4H696" stroke="#000" stroke-width="1" fill="none"/>
<path d="M821.1,117.7V128M930.5,117.7V128M1040,117.7V128M1259,117.7V128M1368.4,117.7V128M1477.9,117.7V128M1696.8,117.7V128M1806.3,117.7V128M1915.8,117.7V128M2134.7,117.7V128M2244.2,117.7V128M2353.7,117.7V128M2572.6,117.7V128M2682.1,117.7V128M2791.5,117.7V128M685.5,200.7H696M685.5,310.2H696M685.5,529.1H696M685.5,638.6H696M685.5,748.1H696M685.5,967H696M685.5,1076.5H696M685.5,1185.9H696M685.5,1404.9H696M685.5,1514.3H696M685.5,1623.8H696" stroke="#555" stroke-width="1.3" fill="none"/>
<path d="M733,78.5V128M646.5,575H696" stroke="#ff0000" stroke-width="3" fill="none"/>
<text x="711.6" y="104" font-size="24" text-anchor="middle" stroke="#000" stroke-width="0.4" font-family="Liberation Sans,sans-serif">2</text>
<text x="1149.5" y="104" font-size="24" text-anchor="middle" stroke="#000" stroke-width="0.4" font-family="Liberation Sans,sans-serif">3</text>
<text x="1587.4" y="104" font-size="24" text-anchor="middle" stroke="#000" stroke-width="0.4" font-family="Liberation Sans,sans-serif">4</text>
<text x="2025.2" y="104" font-size="24" text-anchor="middle" stroke="#000" stroke-width="0.4" font-family="Liberation Sans,sans-serif">5</text>
<text x="2463.1" y="104" font-size="24" text-anchor="middle" stroke="#000" stroke-width="0.4" font-family="Liberation Sans,sans-serif">6</text>
<text transform="translate(672.3,419.9) rotate(-90)" font-size="24" text-anchor="middle" stroke="#000" stroke-width="0.4" font-family="Liberation Sans,sans-serif">4</text>
<text transform="translate(672.3,857.8) rotate(-90)" font-size="24" text-anchor="middle" stroke="#000" stroke-width="0.4" font-family="Liberation Sans,sans-serif">3</text>
<text transform="translate(672.3,1295.7) rotate(-90)" font-size="24" text-anchor="middle" stroke="#000" stroke-width="0.4" font-family="Liberation Sans,sans-serif">2</text>
<g stroke="#111" stroke-width="1.4" fill="none" stroke-linecap="round"><path d="M2696.2,16.5H2710.8"/><rect x="2765.6" y="13.1" width="10.6" height="10" rx="2.4"/><path d="M2768.8,9.9H2775.6A3.6,3.6 0 0 1 2779.2,13.5V20.6"/><path d="M2836.4,9.2L2850.6,23.5M2850.6,9.2L2836.4,23.5"/></g>
</svg></body></html>
